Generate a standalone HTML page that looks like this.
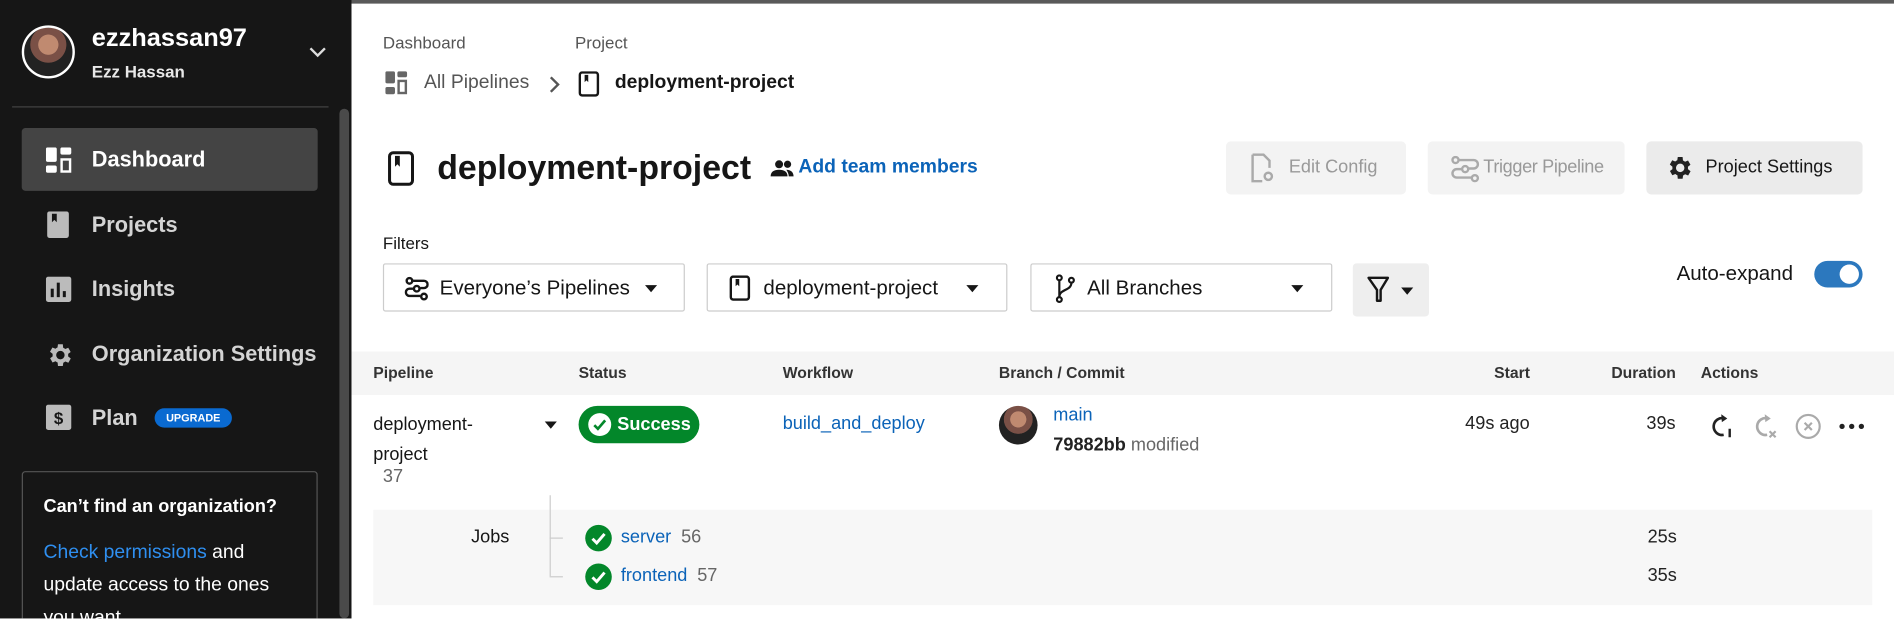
<!DOCTYPE html>
<html><head><meta charset="utf-8"><style>
*{box-sizing:border-box;margin:0;padding:0}
html,body{width:1894px;height:619px;overflow:hidden;background:#fff;font-family:"Liberation Sans",Arial,sans-serif}
#w{position:absolute;left:0;top:0;width:1568px;height:512px;overflow:hidden;transform:scale(1.2079);transform-origin:0 0}
.a{position:absolute;white-space:nowrap}
.sb{position:absolute;left:0;top:0;width:291px;height:512px;background:#161616}
.nav{position:absolute;left:76px;font-size:18px;font-weight:bold;color:#d4d4d4}
.hd{position:absolute;top:301px;font-size:13px;font-weight:bold;color:#333}
.dd{position:absolute;top:218px;height:40px;border:1px solid #ccc;border-radius:2px;font-size:17px;color:#161616}
.caret{position:absolute;width:0;height:0;border-left:5px solid transparent;border-right:5px solid transparent;border-top:6px solid #161616}
.btn{position:absolute;top:117px;height:44px;border-radius:4px;font-size:15px}
</style></head><body><div id="w">
<div class="a" style="left:0;top:0;width:1568px;height:3px;background:#5a5a5a"></div>
<div class="sb"></div>
<div class="a" style="left:281px;top:90px;width:8px;height:422px;background:#4a4a4a;border-radius:4px"></div>
<div class="a" style="left:18px;top:21px;width:44px;height:44px;border-radius:50%;border:2px solid #fff;background:radial-gradient(circle at 50% 35%,#c08a70 0 25%,#7a5046 26% 45%,#222 46%)"></div>
<div class="a" style="left:76px;top:20px;font-size:21px;font-weight:bold;color:#fff">ezzhassan97</div>
<div class="a" style="left:76px;top:51px;font-size:14px;font-weight:bold;color:#e8e8e8">Ezz Hassan</div>
<svg class="a" style="left:256px;top:38px" width="14" height="10"><path d="M1 2l6 6 6-6" stroke="#ddd" stroke-width="2" fill="none"/></svg>
<div class="a" style="left:10px;top:88px;width:262px;height:1px;background:#444"></div>
<div class="a" style="left:18px;top:106px;width:245px;height:52px;background:#444;border-radius:3px"></div>
<svg class="a" style="left:38px;top:122px" width="22" height="22"><rect x="0" y="0" width="9" height="12" rx="1.5" fill="#fff"/><rect x="12" y="0" width="9" height="6" rx="1.5" fill="#fff"/><rect x="0" y="15" width="9" height="6" rx="1.5" fill="#fff"/><rect x="13" y="10" width="7" height="10" fill="none" stroke="#fff" stroke-width="2"/></svg>
<div class="nav" style="top:122px;color:#fff">Dashboard</div>
<svg class="a" style="left:39px;top:175px" width="20" height="24"><rect width="18" height="22" rx="2" fill="#bbb"/><path d="M4 2h4v7l-2-2-2 2z" fill="#161616"/></svg>
<div class="nav" style="top:176px">Projects</div>
<svg class="a" style="left:38px;top:229px" width="22" height="22"><rect width="21" height="21" rx="2" fill="#bbb"/><rect x="4" y="10" width="2.5" height="7" fill="#161616"/><rect x="9" y="5" width="2.5" height="12" fill="#161616"/><rect x="14" y="12" width="2.5" height="5" fill="#161616"/></svg>
<div class="nav" style="top:229px">Insights</div>
<svg class="a" style="left:37px;top:282px" width="24" height="24" viewBox="0 0 24 24"><path fill="#bbb" d="M19.4 13a7.5 7.5 0 000-2l2.1-1.6-2-3.5-2.5 1a7.7 7.7 0 00-1.7-1L15 3h-4l-.4 2.7a7.7 7.7 0 00-1.7 1l-2.5-1-2 3.5L6.6 11a7.5 7.5 0 000 2l-2.1 1.6 2 3.5 2.5-1c.5.4 1.1.8 1.7 1L11 21h4l.4-2.7c.6-.3 1.200-.6 1.7-1l2.5 1 2-3.5zM13 15.5A3.5 3.5 0 1113 8.5a3.5 3.5 0 010 7z"/></svg>
<div class="nav" style="top:283px">Organization Settings</div>
<svg class="a" style="left:38px;top:335px" width="22" height="22"><rect width="21" height="21" rx="2" fill="#bbb"/><text x="10.5" y="16" font-size="14" font-weight="bold" text-anchor="middle" fill="#161616" font-family="Liberation Sans">$</text></svg>
<div class="nav" style="top:336px">Plan</div>
<div class="a" style="left:128px;top:338px;width:64px;height:16px;border-radius:8px;background:#0a6ad1;color:#fff;font-size:9px;font-weight:bold;text-align:center;line-height:16px">UPGRADE</div>
<div class="a" style="left:18px;top:390px;width:245px;height:140px;border:1px solid #555;border-radius:3px"></div>
<div class="a" style="left:36px;top:411px;font-size:15px;font-weight:bold;color:#fff">Can’t find an organization?</div>
<div class="a" style="left:36px;top:444px;font-size:16px;color:#fff;line-height:27px;white-space:normal;width:200px"><span style="color:#2f8ff0">Check permissions</span> and update access to the ones you want.</div>

<div class="a" style="left:317px;top:27px;font-size:14px;color:#555">Dashboard</div>
<div class="a" style="left:476px;top:27px;font-size:14px;color:#555">Project</div>
<svg class="a" style="left:319px;top:59px" width="22" height="21"><rect x="0" y="0" width="8" height="10" rx="1.5" fill="#666"/><rect x="10" y="0" width="8" height="5" rx="1.5" fill="#666"/><rect x="0" y="13" width="8" height="6" rx="1.5" fill="#666"/><rect x="11" y="8" width="6" height="10" fill="none" stroke="#666" stroke-width="2"/></svg>
<div class="a" style="left:351px;top:60px;font-size:16px;color:#555">All Pipelines</div>
<svg class="a" style="left:454px;top:63px" width="10" height="14"><path d="M2 1l6 6-6 6" stroke="#555" stroke-width="2" fill="none"/></svg>
<svg class="a" style="left:479px;top:59px" width="18" height="22"><rect x="1" y="1" width="15" height="19" rx="2" fill="none" stroke="#161616" stroke-width="2"/><path d="M5 3h3v6l-1.5-1.5L5 9z" fill="#161616"/></svg>
<div class="a" style="left:509px;top:60px;font-size:16px;font-weight:bold;color:#161616">deployment-project</div>

<svg class="a" style="left:321px;top:125px" width="22" height="30"><rect x="1.5" y="1.5" width="19" height="26" rx="3" fill="none" stroke="#161616" stroke-width="2.5"/><path d="M6 4h4v9l-2-2-2 2z" fill="#161616"/></svg>
<div class="a" style="left:362px;top:123px;font-size:28px;font-weight:bold;color:#161616">deployment-project</div>
<svg class="a" style="left:637px;top:132px" width="22" height="16"><circle cx="8" cy="4" r="3.3" fill="#161616"/><circle cx="15" cy="4" r="3" fill="#161616"/><path d="M1 14c0-4 3-5.5 7-5.5s7 1.5 7 5.5z M14 8.5c3 0 6 1.5 6 5.5h-4c0-2-1-4-2-5.5z" fill="#161616"/></svg>
<div class="a" style="left:661px;top:130px;font-size:16px;font-weight:bold;color:#0b63b8">Add team members</div>

<div class="btn" style="left:1015px;width:149px;background:#f3f3f3"></div>
<svg class="a" style="left:1035px;top:127px" width="22" height="26"><path d="M2 1h9l5 5v6 M2 1v22h8" fill="none" stroke="#aaa" stroke-width="2"/><circle cx="15" cy="19" r="3" fill="none" stroke="#aaa" stroke-width="2"/></svg>
<div class="a" style="left:1067px;top:130px;font-size:15px;color:#999">Edit Config</div>
<div class="btn" style="left:1182px;width:163px;background:#f3f3f3"></div>
<svg class="a" style="left:1201px;top:129px" width="24" height="22"><circle cx="4" cy="3.5" r="2.5" fill="none" stroke="#aaa" stroke-width="2"/><circle cx="12" cy="11" r="2.5" fill="none" stroke="#aaa" stroke-width="2"/><circle cx="20" cy="18.5" r="2.5" fill="none" stroke="#aaa" stroke-width="2"/><path d="M7 3.5h12a3.5 3.5 0 010 7h-4M9 11H5a3.5 3.5 0 000 7h12" fill="none" stroke="#aaa" stroke-width="2"/></svg>
<div class="a" style="left:1228px;top:130px;font-size:15px;color:#999;letter-spacing:-0.3px">Trigger Pipeline</div>
<div class="btn" style="left:1363px;width:179px;background:#ebebeb"></div>
<svg class="a" style="left:1378px;top:127px" width="24" height="24" viewBox="0 0 24 24"><path fill="#222" d="M19.4 13a7.5 7.5 0 000-2l2.1-1.6-2-3.5-2.5 1a7.7 7.7 0 00-1.7-1L15 3h-4l-.4 2.7a7.7 7.7 0 00-1.7 1l-2.5-1-2 3.5L6.6 11a7.5 7.5 0 000 2l-2.1 1.6 2 3.5 2.5-1c.5.4 1.1.8 1.7 1L11 21h4l.4-2.7c.6-.3 1.2-.6 1.7-1l2.5 1 2-3.5zM13 15.5A3.5 3.5 0 1113 8.5a3.5 3.5 0 010 7z"/></svg>
<div class="a" style="left:1412px;top:130px;font-size:15px;color:#161616">Project Settings</div>

<div class="a" style="left:317px;top:193px;font-size:14px;color:#161616">Filters</div>
<div class="dd" style="left:317px;width:250px"><svg class="a" style="left:17px;top:10px" width="20" height="20"><circle cx="4" cy="3.5" r="2.3" fill="none" stroke="#161616" stroke-width="2"/><circle cx="10" cy="10" r="2.3" fill="none" stroke="#161616" stroke-width="2"/><circle cx="16" cy="16.5" r="2.3" fill="none" stroke="#161616" stroke-width="2"/><path d="M7 3.5h9a3 3 0 010 6h-3M7 10H4a3 3 0 000 6h9" fill="none" stroke="#161616" stroke-width="2"/></svg><span class="a" style="left:46px;top:10px">Everyone’s Pipelines</span><div class="caret" style="left:216px;top:17px"></div></div>
<div class="dd" style="left:585px;width:249px"><svg class="a" style="left:18px;top:9px" width="18" height="22"><rect x="1" y="1" width="15" height="19" rx="2" fill="none" stroke="#161616" stroke-width="2"/><path d="M5 3h3v6l-1.5-1.5L5 9z" fill="#161616"/></svg><span class="a" style="left:46px;top:10px">deployment-project</span><div class="caret" style="left:214px;top:17px"></div></div>
<div class="dd" style="left:853px;width:250px"><svg class="a" style="left:20px;top:8px" width="16" height="24"><circle cx="3" cy="3" r="2" fill="none" stroke="#161616" stroke-width="1.8"/><circle cx="3" cy="21" r="2" fill="none" stroke="#161616" stroke-width="1.8"/><circle cx="13" cy="5" r="2" fill="none" stroke="#161616" stroke-width="1.8"/><path d="M3 5v14M13 7c0 7-10 5-10 12" fill="none" stroke="#161616" stroke-width="1.8"/></svg><span class="a" style="left:46px;top:10px">All Branches</span><div class="caret" style="left:215px;top:17px"></div></div>
<div class="a" style="left:1120px;top:218px;width:63px;height:44px;background:#eee;border-radius:3px"><svg class="a" style="left:11px;top:10px" width="22" height="24"><path d="M2 2h16l-6 10v9h-3V12z" fill="none" stroke="#161616" stroke-width="2" stroke-linejoin="round"/></svg><div class="caret" style="left:40px;top:20px"></div></div>
<div class="a" style="left:1388px;top:217px;font-size:17px;color:#161616">Auto-expand</div>
<div class="a" style="left:1502px;top:216px;width:40px;height:22px;border-radius:11px;background:#2c78be"><div class="a" style="left:21px;top:3px;width:16px;height:16px;border-radius:50%;background:#fff"></div></div>

<div class="a" style="left:291px;top:291px;width:1277px;height:36px;background:#f5f5f5"></div>
<div class="hd" style="left:309px">Pipeline</div>
<div class="hd" style="left:479px">Status</div>
<div class="hd" style="left:648px">Workflow</div>
<div class="hd" style="left:827px">Branch / Commit</div>
<div class="hd" style="left:1237px">Start</div>
<div class="hd" style="left:1334px">Duration</div>
<div class="hd" style="left:1408px">Actions</div>

<div class="a" style="left:309px;top:339px;font-size:15px;color:#161616;line-height:25px">deployment-<br>project</div>
<div class="a" style="left:317px;top:386px;font-size:15px;color:#666">37</div>
<div class="caret" style="left:451px;top:349px"></div>
<div class="a" style="left:479px;top:336px;width:100px;height:31px;border-radius:16px;background:#03872a"><svg class="a" style="left:7px;top:5px" width="21" height="21"><circle cx="10.5" cy="10.5" r="9.5" fill="#fff"/><path d="M6 11l3 3 6-7" stroke="#03872a" stroke-width="2.2" fill="none"/></svg><span class="a" style="left:32px;top:7px;color:#fff;font-weight:bold;font-size:15px">Success</span></div>
<div class="a" style="left:648px;top:342px;font-size:15px;color:#0b63b8">build_and_deploy</div>
<div class="a" style="left:827px;top:336px;width:32px;height:32px;border-radius:50%;background:radial-gradient(circle at 50% 35%,#c08a70 0 25%,#7a5046 26% 45%,#222 46%)"></div>
<div class="a" style="left:872px;top:335px;font-size:15px;color:#0b63b8">main</div>
<div class="a" style="left:872px;top:360px;font-size:15px;color:#161616"><b style="color:#222">79882bb</b> <span style="color:#666">modified</span></div>
<div class="a" style="left:1213px;top:342px;font-size:15px;color:#222">49s ago</div>
<div class="a" style="left:1363px;top:342px;font-size:15px;color:#222">39s</div>
<svg class="a" style="left:1414px;top:341px" width="24" height="24"><path d="M14 5.5a7 7 0 10-1 13.5" fill="none" stroke="#222" stroke-width="2.2"/><path d="M11 2l5 3.5-4.5 3z" fill="#222"/><path d="M18 14v7" stroke="#222" stroke-width="2"/></svg>
<svg class="a" style="left:1450px;top:341px" width="24" height="24"><path d="M14 5.5a7 7 0 10-1 13.5" fill="none" stroke="#aaa" stroke-width="2.2"/><path d="M11 2l5 3.5-4.5 3z" fill="#aaa"/><path d="M15 16l5 5M20 16l-5 5" stroke="#aaa" stroke-width="1.8"/></svg>
<svg class="a" style="left:1486px;top:342px" width="22" height="22"><circle cx="11" cy="11" r="9.5" fill="none" stroke="#aaa" stroke-width="1.8"/><path d="M8 8l6 6M14 8l-6 6" stroke="#aaa" stroke-width="1.8"/></svg>
<svg class="a" style="left:1522px;top:349px" width="24" height="8"><circle cx="3" cy="4" r="2.2" fill="#222"/><circle cx="11" cy="4" r="2.2" fill="#222"/><circle cx="19" cy="4" r="2.2" fill="#222"/></svg>

<div class="a" style="left:309px;top:422px;width:1241px;height:79px;background:#f7f7f7"></div>
<div class="a" style="left:455px;top:410px;width:1px;height:67px;background:#ccc"></div>
<div class="a" style="left:455px;top:445px;width:11px;height:1px;background:#ccc"></div>
<div class="a" style="left:455px;top:477px;width:11px;height:1px;background:#ccc"></div>
<div class="a" style="left:390px;top:436px;font-size:15px;color:#161616">Jobs</div>
<svg class="a" style="left:484px;top:434px" width="23" height="23"><circle cx="11.5" cy="11.5" r="11" fill="#03872a"/><path d="M6.5 12l3.5 3.5 6.5-7.5" stroke="#fff" stroke-width="2.4" fill="none"/></svg>
<div class="a" style="left:514px;top:436px;font-size:15px;color:#0b63b8">server <span style="color:#666;margin-left:4px">56</span></div>
<svg class="a" style="left:484px;top:466px" width="23" height="23"><circle cx="11.5" cy="11.5" r="11" fill="#03872a"/><path d="M6.5 12l3.5 3.5 6.5-7.5" stroke="#fff" stroke-width="2.4" fill="none"/></svg>
<div class="a" style="left:514px;top:468px;font-size:15px;color:#0b63b8">frontend <span style="color:#666;margin-left:4px">57</span></div>
<div class="a" style="left:1364px;top:436px;font-size:15px;color:#222">25s</div>
<div class="a" style="left:1364px;top:468px;font-size:15px;color:#222">35s</div>
</div></body></html>
